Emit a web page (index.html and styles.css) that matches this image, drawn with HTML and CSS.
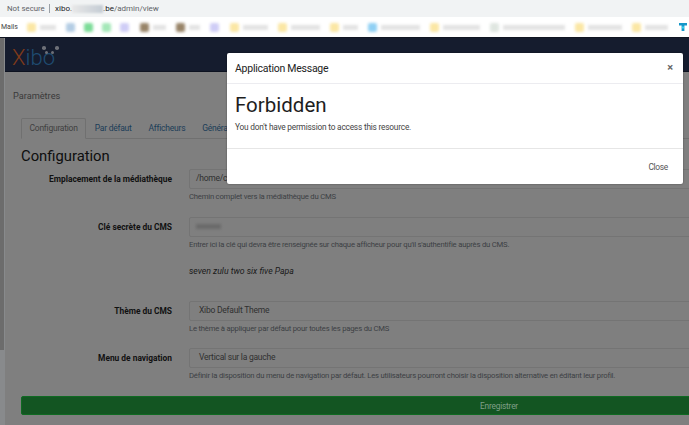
FILE: index.html
```html
<!DOCTYPE html>
<html lang="fr">
<head>
<meta charset="utf-8">
<title>Xibo</title>
<link rel="stylesheet" href="styles.css">
</head>
<body>
<header class="urlbar">
  <span class="secure">Not secure</span>
  <span class="sep"></span>
  <span class="url"><b>xibo.</b><i class="smudge"></i><b>.be</b>/admin/view</span>
</header>
<nav class="bookmarks">
  <span class="mails">Mails</span>
  <div class="marks">
    <i class="bm folder"></i><i class="bl l16"></i>
    <i class="bm solo blue2"></i>
    <i class="bm solo green"></i>
    <i class="bm solo green2"></i>
    <i class="bm solo violet"></i>
    <i class="bm brown"></i><i class="bl l13"></i>
    <i class="bm brown"></i><i class="bl l11"></i>
    <i class="bm solo violet"></i>
    <i class="bm folder"></i><i class="bl l25"></i>
    <i class="bm folder"></i><i class="bl l29"></i>
    <i class="bm folder"></i><i class="bl l15"></i>
    <i class="bm sky"></i><i class="bl l39"></i>
    <i class="bm folder"></i><i class="bl l37"></i>
    <i class="bm sand"></i><i class="bl l62"></i>
    <i class="bm folder"></i><i class="bl l34"></i>
    <i class="bm folder"></i><i class="bl l23"></i>
  </div>
  <svg class="ext" viewBox="0 0 8 8" width="8" height="8"><path d="M0 0h8v2.500H5.400V8H2.600V2.500H0z" fill="#1597c9"/><path d="M3 3.500h2v2H3z" fill="#35d4f0"/></svg>
</nav>
<div class="viewport">
  <aside class="rail"><div class="thumb"></div></aside>
  <main class="app">
    <div class="topnav">
      <div class="logo">
        <span class="x">X</span><span class="ibo">ibo</span>
        <i class="dot d1"></i><i class="dot d2"></i><i class="dot d3"></i><i class="dot d4"></i>
      </div>
    </div>
    <div class="content">
      <h2 class="pagetitle">Paramètres</h2>
      <ul class="tabs">
        <li class="tab active">Configuration</li>
        <li class="tab">Par défaut</li>
        <li class="tab">Afficheurs</li>
        <li class="tab">Général</li>
      </ul>
      <h1 class="section">Configuration</h1>
      <form class="form">
        <div class="row r1">
          <label class="lbl">Emplacement de la médiathèque</label>
          <div class="field"><div class="input">/home/cms/library</div><p class="help">Chemin complet vers la médiathèque du CMS</p></div>
        </div>
        <div class="row r2">
          <label class="lbl">Clé secrète du CMS</label>
          <div class="field">
            <div class="input"><i class="secret"></i></div>
            <p class="help">Entrer ici la clé qui devra être renseignée sur chaque afficheur pour qu'il s'authentifie auprès du CMS.</p>
            <p class="phonetic">seven zulu two six five Papa</p>
          </div>
        </div>
        <div class="row r3">
          <label class="lbl">Thème du CMS</label>
          <div class="field"><div class="input select">Xibo Default Theme</div><p class="help">Le thème à appliquer par défaut pour toutes les pages du CMS</p></div>
        </div>
        <div class="row r4">
          <label class="lbl">Menu de navigation</label>
          <div class="field"><div class="input select">Vertical sur la gauche</div><p class="help">Définir la disposition du menu de navigation par défaut. Les utilisateurs pourront choisir la disposition alternative en éditant leur profil.</p></div>
        </div>
        <div class="save">Enregistrer</div>
      </form>
    </div>
  </main>
</div>
<section class="modal">
  <div class="modal-head"><span class="modal-title">Application Message</span><span class="close-x">×</span></div>
  <div class="modal-body">
    <div class="forbidden">Forbidden</div>
    <p class="msg">You don't have permission to access this resource.</p>
  </div>
  <div class="modal-foot"><span class="close">Close</span></div>
</section>
</body>
</html>
```
FILE: styles.css
```css
* { box-sizing: border-box; }
html, body { margin: 0; height: 100%; overflow: hidden; }
body { width: 689px; height: 425px; font-family: Roboto, "Open Sans", sans-serif; background: #7f7f7f; display: flex; flex-direction: column; position: relative; }

.urlbar { height: 17px; background: #f1f3f4; display: flex; align-items: center; padding-left: 7px; font-size: 7.8px; color: #5f6368; flex: none; }
.secure { width: 42px; white-space: nowrap; }
.sep { width: 1px; height: 9px; background: #9aa0a6; margin-right: 5px; }
.url { color: #5f6368; font-size: 8px; display: flex; align-items: center; }
.url b { color: #202124; font-weight: 400; }
.smudge { width: 31px; height: 8px; background: linear-gradient(90deg, #e8e8e8, #c4ccd4); filter: blur(1px); }

.bookmarks { height: 20px; background: #fff; display: flex; align-items: center; padding-left: 1px; font-size: 7px; color: #444; flex: none; position: relative; }
.mails { width: 26px; }
.marks { display: flex; align-items: center; filter: blur(1.5px); flex: none; width: 645px; overflow: hidden; }
.bm { width: 9px; height: 9px; flex: none; margin-right: 4px; border-radius: 2px; background: #fbe7a4; }
.solo { margin-right: 9px; }
.bl { height: 5px; background: #e2e2e2; margin-right: 10px; flex: none; }
.l11 { width: 11px; } .l13 { width: 13px; } .l15 { width: 15px; } .l16 { width: 16px; } .l23 { width: 23px; } .l25 { width: 25px; }
.l29 { width: 29px; } .l34 { width: 34px; } .l37 { width: 37px; } .l39 { width: 39px; } .l62 { width: 62px; }
.blue2 { background: #b4cde4; }
.green { background: #7cdc98; }
.green2 { background: #a4e8b8; }
.violet { background: #cfcdf6; margin-right: 11px; }
.brown { background: #988468; }
.sky { background: #8fd0f4; }
.sand { background: #dfe6e0; }
.ext { position: absolute; left: 679px; top: 6px; }

.viewport { flex: 1; display: flex; border-top: 1px solid #101522; min-height: 0; overflow: hidden; }
.rail { width: 5px; background: #888a8c; flex: none; }
.thumb { width: 4px; height: 312px; background: #6c6c6c; }
.app { flex: 1; min-width: 0; overflow: hidden; }
.topnav { height: 34px; background: #151c2e; border-bottom: 1px solid #0d1220; }
.logo { position: relative; width: 60px; height: 33px; margin-left: 7px; font-size: 22px; line-height: 33px; padding-top: 3px; font-weight: 300; }
.x { color: #7f3a1a; }
.ibo { color: #1f4c72; }
.dot { position: absolute; width: 3.500px; height: 3.500px; border-radius: 50%; background: #6d7078; }
.d1 { left: 30px; top: 8px; } .d2 { left: 43px; top: 8px; }
.d3 { left: 33px; top: 13px; width: 3px; height: 3px; } .d4 { left: 39px; top: 13px; width: 3px; height: 3px; }

.content { padding: 0 0 0 16px; color: #333; }
.pagetitle { font-size: 9.2px; font-weight: 400; color: #3a3a3a; margin: 17px 0 0 -8px; line-height: 13px; }
.tabs { list-style: none; display: flex; margin: 16px 0 0; padding: 0; border-bottom: 1px solid #707070; height: 21px; }
.tab { font-size: 8.5px; letter-spacing: -.24px; line-height: 20px; padding: 0 8.500px; color: #1b3d58; white-space: nowrap; }
.tab.active { color: #3f3f3f; border: 1px solid #707070; border-bottom-color: #7f7f7f; height: 21px; border-radius: 2px 2px 0 0; line-height: 18px; padding: 0 7.500px; }
.section { font-size: 14.8px; font-weight: 400; color: #0e0e0e; margin: 5px 0 1px; line-height: 24px; }

.form { margin: 0; }
.row { display: grid; grid-template-columns: 151px 1fr; column-gap: 17px; }
.r1 { height: 48px; }
.r2 { height: 84px; }
.r3 { height: 47px; }
.r4 { height: 48px; }
.lbl { font-size: 8.4px; font-weight: 700; color: #111; text-align: right; line-height: 21px; white-space: nowrap; }
.field { min-width: 0; }
.input { height: 20px; width: 520px; border: 1px solid #747474; border-radius: 2px; font-size: 8.5px; letter-spacing: -.24px; line-height: 17px; padding: 0 6px; color: #303030; white-space: nowrap; }
.select { padding-left: 9px; }
.secret { display: inline-block; width: 25px; height: 5px; background: #6a6a6a; filter: blur(1.5px); margin-top: 6px; }
.help { margin: 1px 0 0; font-size: 7.7px; letter-spacing: -.21px; line-height: 13px; color: #3c4044; white-space: nowrap; }
.phonetic { margin: 14px 0 0; font-size: 8.7px; line-height: 13px; font-style: italic; color: #1a1a1a; }
.save { height: 19px; width: 956px; background: #135522; border: 1px solid #0f6a22; border-radius: 2px; color: #7f9f87; text-align: center; font-size: 8.400px; letter-spacing: -.22px; line-height: 19px; }

.modal { position: absolute; left: 227px; top: 53px; width: 456px; height: 131px; background: #fff; border-radius: 2px; box-shadow: 0 0 2px rgba(0,0,0,.45); display: flex; flex-direction: column; color: #212529; }
.modal-head { height: 31px; border-bottom: 1px solid #ececf0; display: flex; justify-content: space-between; align-items: center; padding: 0 10px 0 8px; flex: none; }
.modal-title { font-size: 10.5px; letter-spacing: -.25px; color: #222; margin-top: 1px; }
.close-x { font-size: 11px; color: #666; font-weight: 700; line-height: 1; margin-top: -2px; }
.modal-body { height: 64px; padding: 8px 8px 0; flex: none; }
.forbidden { font-size: 20.500px; line-height: 26px; color: #1e1e1e; }
.msg { margin: 3px 0 0; font-size: 8.300px; letter-spacing: -.2px; line-height: 12px; color: #444; }
.modal-foot { flex: 1; border-top: 1px solid #e6e6e6; display: flex; justify-content: flex-end; align-items: center; padding-right: 15px; font-size: 8.400px; letter-spacing: -.3px; color: #555; }
```
